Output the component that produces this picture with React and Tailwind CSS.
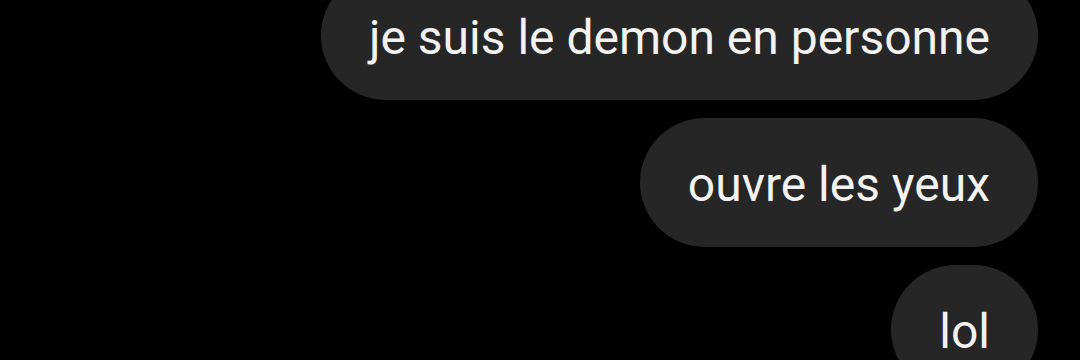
export default function App() {
    const messages = ["je suis le demon en personne", "ouvre les yeux", "lol"];

    return (
        <div className="h-[360px] w-[1080px] overflow-hidden bg-black">
            {/* bulles */}
            <div className="-mt-[29px] flex flex-col items-end gap-[18px] pr-[42px]">
                {messages.map((message) => (
                    <div
                        key={message}
                        className="flex h-[129px] shrink-0 items-center rounded-full bg-[#262626] px-12 pt-[4px] text-[48px] text-[#f2f2f2]"
                        style={{ fontFamily: "Roboto, 'Noto Sans', sans-serif" }}
                    >
                        {message}
                    </div>
                ))}
            </div>
        </div>
    );
}
